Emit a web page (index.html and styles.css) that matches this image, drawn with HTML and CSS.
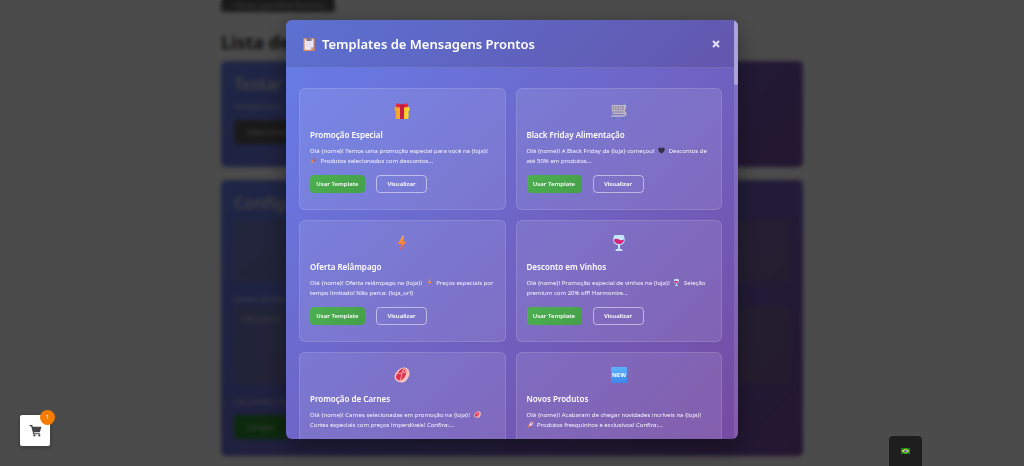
FILE: index.html
```html
<!doctype html>
<html lang="pt-BR">
  <head>
    <meta charset="UTF-8" />
    <meta name="viewport" content="width=device-width, initial-scale=1.0" />
    <title>Templates de Mensagens Prontos</title>
    <link rel="stylesheet" href="styles.css">
  </head>

  <body>
    <!-- emojis -->
    <svg class="sprite" aria-hidden="true">
      <defs>
        <linearGradient id="bolt-fill" x1="0" y1="0" x2="0" y2="1">
          <stop offset="0" stop-color="#ffb03a" />
          <stop offset="1" stop-color="#f4513f" />
        </linearGradient>
        <linearGradient id="new-fill" x1="0" y1="0" x2="0" y2="1">
          <stop offset="0" stop-color="#5ab4ff" />
          <stop offset="1" stop-color="#3e86e8" />
        </linearGradient>
        <linearGradient id="box-fill">
          <stop offset="0" stop-color="#f59b2c" />
          <stop offset="1" stop-color="#fddc2e" />
        </linearGradient>
      </defs>
      <symbol id="clipboard" viewBox="0 0 32 32">
        <rect x="3" y="2" width="26" height="30" rx="2" fill="#d98a62" />
        <path d="M6 5h20v18l-6 6H6z" fill="#eeeaf8" />
        <path d="M26 23l-6 6v-6z" fill="#b9b2d2" />
        <path d="M10 13h12M10 17h12M10 21h8" stroke="#d8d2e8" stroke-width="1.5" />
        <path d="M10 3h3a3 3 0 0 1 6 0h3v6H10z" fill="#7c7792" />
      </symbol>
      <symbol id="gift" viewBox="0 0 32 32">
        <path d="M3 13h26v17a2 2 0 0 1-2 2H5a2 2 0 0 1-2-2z" fill="url(#box-fill)" />
        <rect x="1" y="8" width="30" height="8" rx="2" fill="url(#box-fill)" />
        <path d="M12 8h8v24h-8z" fill="#c71f4b" />
        <path d="M16 8C8 10 3 9 4 4c1-5 10-3 12 1 2-4 11-6 12-1 1 5-4 6-12 4z" fill="#e8253c" />
        <path d="M13 3h6v6h-6z" fill="#b5173f" />
      </symbol>
      <symbol id="cart" viewBox="0 0 32 32">
        <path d="M2 5h26l-2 16H4z" fill="#8b87a3" stroke="#c4bdc5" stroke-width="2" />
        <path d="M7 5l1 16M12 5v16M17 5v16M22 5l-1 16M3 10h24M3 15h23" stroke="#c4bdc5" stroke-width="1.5" />
        <path d="M32 3h-3l-3 15q5 2 3 5-2 3-6 3H1" fill="none" stroke="#c4bdc5" stroke-width="3" />
        <circle cx="6" cy="30" r="2" fill="#347fc0" />
        <circle cx="25" cy="30" r="2" fill="#347fc0" />
        <path d="M29 1h3v3h-3z" fill="#347fc0" />
      </symbol>
      <symbol id="bolt" viewBox="0 0 32 32">
        <path d="M18 1L7 18h7l-2 13 13-18h-7l2-12z" fill="url(#bolt-fill)" />
      </symbol>
      <symbol id="wine" viewBox="0 0 32 32">
        <path d="M7 0h18c6 13 0 19-7 20v8h4q2 4 0 4H10q-2 0 0-4h4v-8C7 19 1 13 7 0z" fill="#c5e6f8" />
        <path d="M6 9q5-3 10 0t10 0c0 5-4 9-10 9S6 14 6 9z" fill="#d3247d" />
      </symbol>
      <symbol id="meat" viewBox="0 0 32 32">
        <path d="M22 1c8 1 11 10 8 17-3 8-9 14-15 13C3 30-1 22 2 15 5 8 14 0 22 1z" fill="#f8c4bd" />
        <path d="M20 3c5 0 6 6 4 11-2 7-7 13-12 13-7-1-10-6-7-11C8 9 14 3 20 3z" fill="#e0304f" />
        <circle cx="21" cy="8" r="3" fill="#e0304f" stroke="#f9c9c5" stroke-width="2" />
        <path d="M5 12q8 3 13-2M16 12q-1 6-3 14" fill="none" stroke="#f9c9c5" stroke-width="1.5" />
      </symbol>
      <symbol id="new" viewBox="0 0 32 32">
        <rect width="32" height="32" rx="2" fill="url(#new-fill)" />
        <text x="16" y="20" class="new-label">NEW</text>
      </symbol>
      <symbol id="party" viewBox="0 0 32 32">
        <path d="M2 30L11 11l11 11z" fill="#e69045" />
        <path d="M11 11q9 2 11 11-8 0-11-11z" fill="#a34867" />
        <path d="M17 13q6-2 4-9M22 18q4-5 9-3" fill="none" stroke="#d9406b" stroke-width="3" />
        <circle cx="10" cy="5" r="2" fill="#42a5e0" />
        <circle cx="28" cy="7" r="2" fill="#4fae63" />
        <circle cx="28" cy="25" r="2" fill="#42a5e0" />
      </symbol>
      <symbol id="heart" viewBox="0 0 32 32">
        <path d="M16 30C6 23 1 17 1 10 1 2 12 0 16 7c4-7 15-5 15 3 0 7-5 13-15 20z" fill="#353044" />
      </symbol>
      <symbol id="rocket" viewBox="0 0 32 32">
        <path d="M8 15l-6 5 9 1 1 9 6-7z" fill="#dc3155" />
        <path d="M30 2C18 2 11 9 8 19l5 5C23 21 30 14 30 2z" fill="#dcd5ea" />
        <path d="M30 2q-5 0-8 2l6 6q2-3 2-8z" fill="#dc3155" />
        <circle cx="20" cy="12" r="3" fill="#3b8ed0" />
        <path d="M8 22q-6 2-6 8 6 0 8-6z" fill="#f6a23b" />
      </symbol>
    </svg>

    <div class="page">
      <button class="btn-dark" type="button">+ Baixar guia Meus Recursos</button>
      <h1>Lista de</h1>
      <section class="panel">
        <h2>Testar</h2>
        <p>Verifique se as</p>
        <button class="btn-dark" type="button">Testar conexão</button>
      </section>
      <section class="panel">
        <h2>Configu</h2>
        <div class="panel-box"></div>
        <label for="mensagem">Modelo de Mens</label>
        <textarea id="mensagem" class="panel-box">Olá {nome}!</textarea>
        <p>Use {nome}, {loja}</p>
        <button class="btn-green" type="button">Carregar</button>
      </section>
    </div>

    <div class="overlay">
      <div class="modal" role="dialog" aria-labelledby="modal-title">
        <div class="modal-content">
          <header class="modal-header">
            <svg class="title-icon"><use href="#clipboard" /></svg>
            <h2 id="modal-title">Templates de Mensagens Prontos</h2>
            <button class="close" type="button" aria-label="Fechar">
              <svg viewBox="0 0 8 8"><path d="M1 1l6 6M7 1L1 7" /></svg>
            </button>
          </header>
          <div class="templates">
            <article class="card">
              <svg class="card-icon"><use href="#gift" /></svg>
              <h3>Promoção Especial</h3>
              <p>Olá {nome}! Temos uma promoção especial para você na {loja}!<br /><svg class="emoji first"><use href="#party" /></svg> Produtos selecionados com descontos...</p>
              <div class="actions">
                <button class="use" type="button">Usar Template</button>
                <button class="view" type="button">Visualizar</button>
              </div>
            </article>
            <article class="card">
              <svg class="card-icon"><use href="#cart" /></svg>
              <h3>Black Friday Alimentação</h3>
              <p>Olá {nome}! A Black Friday da {loja} começou! <svg class="emoji"><use href="#heart" /></svg> Descontos de<br />até 50% em produtos...</p>
              <div class="actions">
                <button class="use" type="button">Usar Template</button>
                <button class="view" type="button">Visualizar</button>
              </div>
            </article>
            <article class="card">
              <svg class="card-icon"><use href="#bolt" /></svg>
              <h3>Oferta Relâmpago</h3>
              <p>Olá {nome}! Oferta relâmpago na {loja}! <svg class="emoji"><use href="#bolt" /></svg> Preços especiais por<br />tempo limitado! Não perca: {loja_url}</p>
              <div class="actions">
                <button class="use" type="button">Usar Template</button>
                <button class="view" type="button">Visualizar</button>
              </div>
            </article>
            <article class="card">
              <svg class="card-icon"><use href="#wine" /></svg>
              <h3>Desconto em Vinhos</h3>
              <p>Olá {nome}! Promoção especial de vinhos na {loja}! <svg class="emoji"><use href="#wine" /></svg> Seleção<br />premium com 20% off! Harmonize...</p>
              <div class="actions">
                <button class="use" type="button">Usar Template</button>
                <button class="view" type="button">Visualizar</button>
              </div>
            </article>
            <article class="card">
              <svg class="card-icon"><use href="#meat" /></svg>
              <h3>Promoção de Carnes</h3>
              <p>Olá {nome}! Carnes selecionadas em promoção na {loja}! <svg class="emoji"><use href="#meat" /></svg><br />Cortes especiais com preços imperdíveis! Confira:...</p>
            </article>
            <article class="card">
              <svg class="card-icon"><use href="#new" /></svg>
              <h3>Novos Produtos</h3>
              <p>Olá {nome}! Acabaram de chegar novidades incríveis na {loja}!<br /><svg class="emoji first"><use href="#rocket" /></svg> Produtos fresquinhos e exclusivos! Confira:...</p>
            </article>
          </div>
        </div>
        <div class="rail"><div class="thumb"></div></div>
      </div>
    </div>

    <button class="cart-button" type="button" aria-label="Carrinho">
      <svg viewBox="0 0 24 24">
        <path d="M1 2h5l1 3h16l-3 10H9l1 2h10v2H8L4 4H1z" />
        <circle cx="10" cy="21" r="2" />
        <circle cx="19" cy="21" r="2" />
      </svg>
      <span class="badge">1</span>
    </button>

    <button class="language" type="button" aria-label="Português">
      <svg viewBox="0 0 18 12">
        <rect width="18" height="12" fill="#128a12" />
        <path d="M9 1l8 5-8 5-8-5z" fill="#f3e02c" />
        <circle cx="9" cy="6" r="3" fill="#2a3fb0" />
        <path d="M6 5q4 0 6 2" fill="none" stroke="#fff" />
      </svg>
    </button>
  </body>
</html>
```

FILE: styles.css
```css
* {
  margin: 0;
  padding: 0;
  box-sizing: border-box;
}
:root {
  --gradient: linear-gradient(135deg, #667eea 0%, #764ba2 100%);
}
body {
  height: 100vh;
  overflow: hidden;
  background-color: #fafafa;
  color: #333;
  font-family: "Noto Sans", "Open Sans", sans-serif;
}
button,
textarea {
  font-family: inherit;
  border: none;
}
button {
  cursor: pointer;
}
.sprite {
  position: absolute;
  width: 0;
  height: 0;
}
.new-label {
  font-size: 12px;
  font-weight: 700;
  text-anchor: middle;
  fill: #fff;
}

/* page */
.page {
  width: 582px;
  max-width: 90%;
  margin: 0 auto;
  display: flex;
  flex-direction: column;
  align-items: flex-start;
}
.page h1 {
  font-size: 18px;
  line-height: 24px;
  margin: 18px 0 7px;
}
.btn-dark,
.btn-green {
  height: 24px;
  padding: 0 12px;
  border-radius: 3px;
  background-color: #555;
  color: #ddd;
  font-size: 7px;
}
.page > .btn-dark {
  height: 12px;
  padding: 0 10px;
  line-height: 8px;
}
.btn-green {
  background-color: #2a8a2a;
}
.panel {
  display: flex;
  flex-direction: column;
  align-items: flex-start;
  width: 100%;
  padding: 13px;
  margin-bottom: 13px;
  border-radius: 5px;
  background: var(--gradient);
  color: #ddd;
  font-size: 7px;
}
.panel:nth-of-type(1) {
  height: 106px;
}
.panel:nth-of-type(2) {
  height: 276px;
}
.panel h2 {
  font-size: 16px;
  line-height: 20px;
  font-weight: 600;
  margin-bottom: 7px;
}
.panel p,
.panel label {
  line-height: 12px;
  margin-bottom: 7px;
}
.panel-box {
  width: 100%;
  height: 62px;
  margin-bottom: 12px;
  padding: 8px;
  border-radius: 3px;
  background-color: rgba(130, 130, 120, 0.3);
  color: #ddd;
  font-size: 7px;
  resize: none;
}
.panel label {
  margin-bottom: 0;
}
textarea.panel-box {
  height: 78px;
}

/* modal */
.overlay {
  position: fixed;
  inset: 0;
  display: flex;
  justify-content: center;
  align-items: flex-start;
  padding-top: 20px;
  background-color: rgba(0, 0, 0, 0.7);
  backdrop-filter: blur(2px);
}
.modal {
  display: flex;
  width: 90%;
  max-width: 452px;
  height: 90vh;
  overflow: hidden;
  border-radius: 6px;
  background: var(--gradient);
  box-shadow: 0 8px 24px rgba(0, 0, 0, 0.4);
  color: #fff;
}
.modal-content {
  flex: 1;
  overflow-y: auto;
  scrollbar-width: none;
}
.rail {
  width: 4px;
  background-color: rgba(255, 255, 255, 0.1);
}
.thumb {
  height: 65px;
  border-radius: 3px;
  background-color: rgba(255, 255, 255, 0.35);
}
.modal-header {
  display: flex;
  align-items: center;
  gap: 6px;
  height: 48px;
  padding: 0 16px;
  background-color: rgba(0, 0, 0, 0.1);
  border-bottom: 1px solid rgba(255, 255, 255, 0.1);
}
.modal-header h2 {
  flex: 1;
  font-size: 13px;
  font-weight: 600;
}
.title-icon {
  width: 14px;
  height: 14px;
}
.close {
  width: 8px;
  height: 8px;
  margin-right: -2px;
  background: none;
}
.close svg {
  display: block;
  stroke: #e6e2f4;
  stroke-width: 2;
}
.templates {
  display: grid;
  grid-template-columns: 1fr 1fr;
  gap: 10px;
  padding: 20px 12px 20px 13px;
}
.card {
  height: 122px;
  padding: 14px 10px;
  border: 1px solid rgba(255, 255, 255, 0.12);
  border-radius: 6px;
  background-color: rgba(255, 255, 255, 0.1);
}
.card-icon {
  display: block;
  width: 16px;
  height: 16px;
  margin: 0 auto 10px;
}
.card h3 {
  font-size: 8px;
  line-height: 12px;
  font-weight: 600;
  margin-bottom: 5px;
}
.card p {
  font-size: 6px;
  line-height: 10px;
  color: rgba(255, 255, 255, 0.95);
  white-space: nowrap;
}
.emoji {
  width: 7px;
  height: 7px;
  margin: 0 2px;
  vertical-align: -1px;
}
.emoji.first {
  margin-left: 0;
}
.actions {
  display: flex;
  gap: 11px;
  margin-top: 9px;
}
.actions button {
  height: 18px;
  border-radius: 4px;
  color: #fff;
  font-size: 6px;
  font-weight: 600;
}
.actions .use {
  width: 55px;
  background: linear-gradient(135deg, #4caf50, #45a049);
}
.actions .view {
  width: 51px;
  background: none;
  border: 1px solid rgba(255, 255, 255, 0.5);
}

/* floating buttons */
.cart-button {
  position: fixed;
  left: 20px;
  bottom: 20px;
  width: 30px;
  height: 31px;
  border-radius: 2px;
  background-color: #fff;
  box-shadow: 0 1px 5px rgba(0, 0, 0, 0.3);
}
.cart-button svg {
  display: block;
  width: 13px;
  height: 13px;
  margin: 0 auto;
  fill: #444;
}
.badge {
  position: absolute;
  top: -5px;
  right: -5px;
  width: 15px;
  height: 15px;
  border-radius: 50%;
  background-color: #f57c00;
  color: #fff;
  font-size: 6px;
  line-height: 15px;
}
.language {
  position: fixed;
  right: 102px;
  bottom: 0;
  width: 33px;
  height: 30px;
  border-radius: 4px 4px 0 0;
  background-color: #1e1e1e;
}
.language svg {
  display: block;
  width: 9px;
  height: 6px;
  margin: 0 auto;
}
```
